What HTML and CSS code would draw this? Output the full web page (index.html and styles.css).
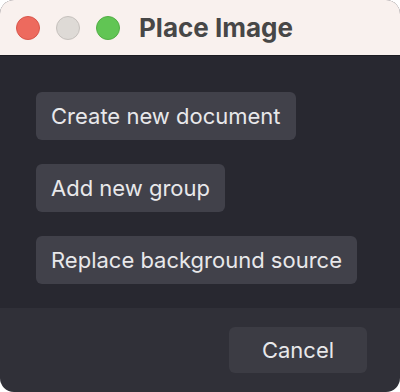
FILE: index.html
```html
<!DOCTYPE html>
<html lang="en">
<head>
  <meta charset="UTF-8" />
  <title>Place Image</title>
  <link rel="stylesheet" href="styles.css">
</head>
<body>
  <div class="window">
    <header class="titlebar">
      <div class="lights">
        <span class="light red"></span>
        <span class="light gray"></span>
        <span class="light green"></span>
      </div>
      <h1>Place Image</h1>
    </header>

    <div class="content">
      <button class="action">Create new document</button>
      <button class="action">Add new group</button>
      <button class="action">Replace background source</button>
    </div>

    <footer class="footer">
      <button class="action cancel">Cancel</button>
    </footer>
  </div>
</body>
</html>
```

FILE: styles.css
```css
body {
  margin: 0;
  background: #ffffff;
  font-family: Inter, "Noto Sans", sans-serif;
}

.window {
  width: 400px;
  height: 392px;
  border-radius: 14px;
  overflow: hidden;
  display: flex;
  flex-direction: column;
  background: #303038;
}

.titlebar {
  height: 56px;
  background: #f9f1ee;
  border-bottom: 1px solid #1c1c22;
  display: flex;
  align-items: center;
  padding-left: 16px;
  box-sizing: border-box;
  flex-shrink: 0;
}

.lights {
  display: flex;
  gap: 16px;
}

.light {
  width: 24px;
  height: 24px;
  border-radius: 50%;
  box-sizing: border-box;
}

.red {
  background: #ed6a5e;
  border: 1px solid #d9564b;
}

.gray {
  background: #dedad6;
  border: 1px solid #c6c1bd;
}

.green {
  background: #61c554;
  border: 1px solid #52ae45;
}

h1 {
  margin: 0 0 0 19px;
  font-size: 26px;
  font-weight: 700;
  color: #474747;
}

.content {
  background: #282830;
  height: 252px;
  padding: 36px 0 0 36px;
  box-sizing: border-box;
  display: flex;
  flex-direction: column;
  align-items: flex-start;
  gap: 24px;
  flex-shrink: 0;
}

.action {
  height: 48px;
  padding: 0 15px;
  border: none;
  border-radius: 6px;
  background: #41414a;
  color: #e8e8ea;
  font-family: Inter, "Noto Sans", sans-serif;
  font-size: 22px;
  cursor: pointer;
}

.footer {
  flex: 1;
  display: flex;
  justify-content: flex-end;
  align-items: flex-start;
  padding: 19px 33px 0 0;
}

.cancel {
  width: 138px;
  height: 46px;
  background: #3c3c44;
}
```
